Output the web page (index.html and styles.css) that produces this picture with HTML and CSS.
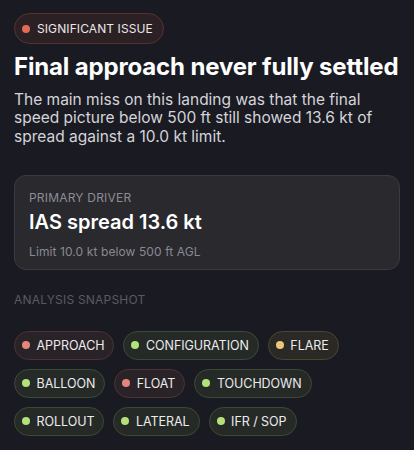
FILE: index.html
```html
<!DOCTYPE html>
<html lang="en">
<head>
<meta charset="utf-8">
<title>Landing debrief</title>
<link rel="stylesheet" href="styles.css">
</head>
<body>
<main class="debrief">
  <span class="severity"><span class="dot dot-red"></span>SIGNIFICANT ISSUE</span>
  <h1 class="headline">Final approach never fully settled</h1>
  <p class="summary">The main miss on this landing was that the final speed picture below 500 ft still showed 13.6 kt of spread against a 10.0 kt limit.</p>

  <section class="driver">
    <div class="driver-label">PRIMARY DRIVER</div>
    <div class="driver-value">IAS spread 13.6 kt</div>
    <div class="driver-note">Limit 10.0 kt below 500 ft AGL</div>
  </section>

  <div class="section-label">ANALYSIS SNAPSHOT</div>
  <ul class="chips">
    <li class="chip chip-bad"><span class="dot dot-pink"></span>APPROACH</li>
    <li class="chip chip-ok"><span class="dot dot-green"></span>CONFIGURATION</li>
    <li class="chip chip-warn"><span class="dot dot-yellow"></span>FLARE</li>
    <li class="chip chip-ok"><span class="dot dot-green"></span>BALLOON</li>
    <li class="chip chip-bad"><span class="dot dot-pink"></span>FLOAT</li>
    <li class="chip chip-ok"><span class="dot dot-green"></span>TOUCHDOWN</li>
    <li class="chip chip-ok"><span class="dot dot-green"></span>ROLLOUT</li>
    <li class="chip chip-ok"><span class="dot dot-green"></span>LATERAL</li>
    <li class="chip chip-ok"><span class="dot dot-green"></span>IFR / SOP</li>
  </ul>
</main>
</body>
</html>
```

FILE: styles.css
```css
html, body {
  margin: 0;
  background: #1a1b22;
}

body {
  font-family: Inter, "Noto Sans", sans-serif;
  color: #f2f2f4;
}

.debrief {
  padding: 13px 14px 14px;
  display: flex;
  flex-direction: column;
  align-items: flex-start;
}

.dot {
  width: 8px;
  height: 8px;
  border-radius: 50%;
  flex: none;
}
.dot-red { background: #e36a57; }
.dot-pink { background: #e5867c; }
.dot-green { background: #b3e27a; }
.dot-yellow { background: #ecc676; }

.severity {
  display: inline-flex;
  align-items: center;
  gap: 7px;
  height: 31px;
  box-sizing: border-box;
  padding: 0 10px 0 7px;
  border: 1px solid #57322f;
  background: #2b2124;
  border-radius: 16px;
  font-size: 12px;
  letter-spacing: 0.1px;
  color: #ece7e8;
}

.headline {
  margin: 8px 0 0;
  font-size: 24px;
  line-height: 30px;
  font-weight: 700;
  letter-spacing: -0.15px;
  white-space: nowrap;
  color: #ffffff;
}

.summary {
  margin: 8.5px 0 0;
  font-size: 15.5px;
  line-height: 18.5px;
  color: #d4d4da;
}

.driver {
  align-self: stretch;
  margin-top: 28.5px;
  padding: 14px 14px 10px;
  background: #29292e;
  border: 1px solid #3a3a40;
  border-radius: 12px;
}

.driver-label {
  font-size: 12px;
  line-height: 15px;
  color: #8d8d95;
  letter-spacing: 0.2px;
}

.driver-value {
  margin-top: 5px;
  font-size: 20px;
  line-height: 24px;
  font-weight: 600;
  color: #ffffff;
}

.driver-note {
  margin-top: 10px;
  font-size: 12px;
  line-height: 15px;
  color: #8a8a92;
  letter-spacing: 0.1px;
}

.section-label {
  margin-top: 22px;
  font-size: 12px;
  line-height: 15px;
  color: #595a63;
  letter-spacing: 0.2px;
}

.chips {
  list-style: none;
  margin: 24px 0 0;
  padding: 0;
  display: flex;
  flex-wrap: wrap;
  gap: 9px 9px;
}

.chip {
  display: inline-flex;
  align-items: center;
  gap: 6.5px;
  height: 29px;
  box-sizing: border-box;
  padding: 0 9px 0 7px;
  border-radius: 15px;
  font-size: 12.5px;
  letter-spacing: -0.05px;
  color: #ecebee;
}
.chip-bad {
  background: #292327;
  border: 1px solid #4d3336;
}
.chip-ok {
  background: #262a26;
  border: 1px solid #3c4a37;
}
.chip-warn {
  background: #2a2925;
  border: 1px solid #4b4532;
}
```
